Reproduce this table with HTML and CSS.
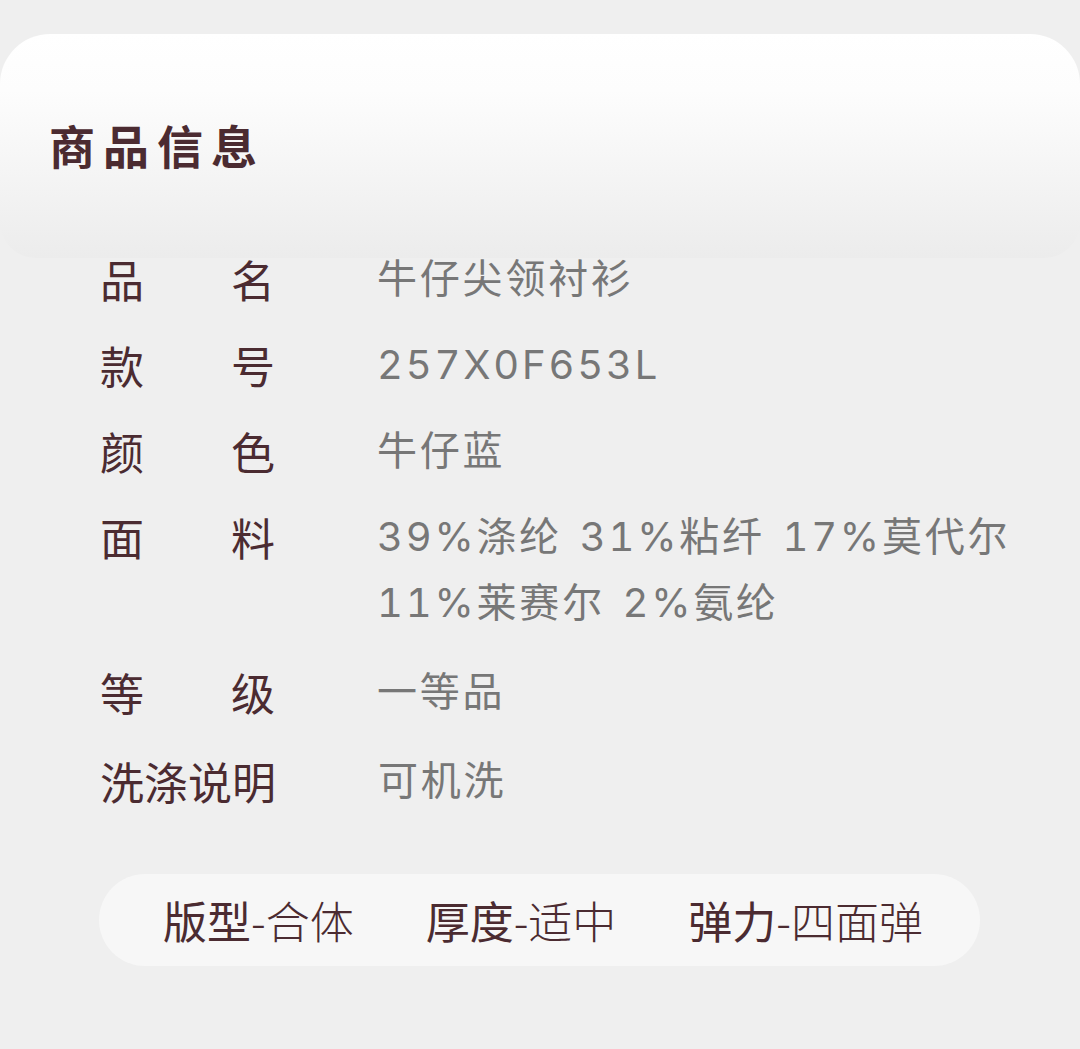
FILE: index.html
```html
<!DOCTYPE html>
<html lang="zh-CN">
<head>
    <meta charset="UTF-8">
    <meta name="viewport" content="width=device-width, initial-scale=1.0">
    <title>商品信息</title>
    <link rel="stylesheet" href="styles.css">
</head>
<body>

<div class="page">
    <div class="header-card">
        <h2 class="title">商品信息</h2>
    </div>

    <div class="info-list">
        <div class="info-row">
            <span class="label justify">品名</span>
            <span class="value">牛仔尖领衬衫</span>
        </div>
        <div class="info-row">
            <span class="label justify">款号</span>
            <span class="value">257X0F653L</span>
        </div>
        <div class="info-row">
            <span class="label justify">颜色</span>
            <span class="value">牛仔蓝</span>
        </div>
        <div class="info-row">
            <span class="label justify">面料</span>
            <span class="value">39%涤纶 31%粘纤 17%莫代尔 11%莱赛尔 2%氨纶</span>
        </div>
        <div class="info-row">
            <span class="label justify">等级</span>
            <span class="value">一等品</span>
        </div>
        <div class="info-row">
            <span class="label">洗涤说明</span>
            <span class="value">可机洗</span>
        </div>
    </div>

    <div class="tags">
        <span class="tag"><b>版型</b>-合体</span>
        <span class="tag"><b>厚度</b>-适中</span>
        <span class="tag"><b>弹力</b>-四面弹</span>
    </div>
</div>

</body>
</html>
```

FILE: styles.css
```css
* {
    box-sizing: border-box;
    margin: 0;
    padding: 0;
}
body {
    font-family: "Noto Sans CJK SC", "Noto Sans", sans-serif;
    background-color: #efefef;
    color: #4b2b31;
}
.page {
    padding-top: 34px;
}
.header-card {
    height: 224px;
    border-radius: 50px 50px 36px 36px;
    background: linear-gradient(to bottom, #ffffff 0%, #fdfdfd 25%, #ececec 100%);
    display: flex;
    align-items: center;
    padding-left: 49px;
    padding-bottom: 4px;
}
.title {
    font-size: 46px;
    font-weight: 700;
    letter-spacing: 8px;
    color: #4b2b31;
}
.info-list {
    display: flex;
    flex-direction: column;
    gap: 20px;
    padding: 0 50px 0 100px;
    margin-top: -12px;
}
.info-row {
    display: flex;
    line-height: 66px;
}
.label {
    flex: 0 0 175px;
    font-size: 44px;
    color: #4b2b31;
    white-space: nowrap;
}
.label.justify {
    text-align: justify;
    text-align-last: justify;
}
.value {
    margin-left: 102px;
    font-family: Inter, "Noto Sans CJK SC", sans-serif;
    font-size: 40px;
    font-variant-numeric: tabular-nums;
    color: #777777;
    letter-spacing: 2.8px;
    word-spacing: 4px;
}
.info-row:nth-child(n+5) {
    margin-top: 3px;
}
.tags {
    margin: 60px 100px 0 99px;
    height: 92px;
    border-radius: 46px;
    background-color: #f7f7f7;
    display: flex;
    align-items: center;
    gap: 72px;
    padding-left: 64px;
    font-size: 44px;
}
.tag {
    font-weight: 300;
    color: #4b2b31;
}
.tag b {
    font-weight: 400;
}
```
